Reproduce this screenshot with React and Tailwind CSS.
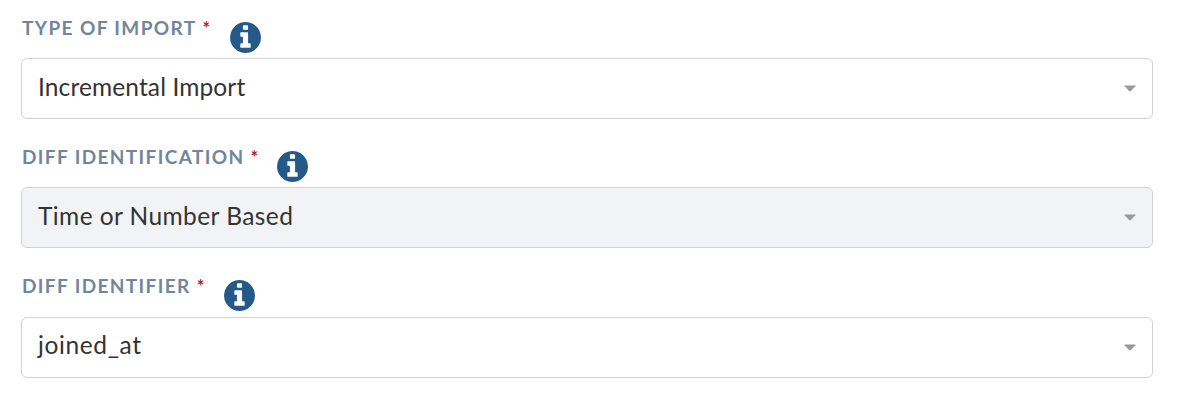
const fields = [
  {
    label: 'TYPE OF IMPORT',
    value: 'Incremental Import',
    tracking: 'tracking-[0.12px]',
    disabled: false,
  },
  {
    label: 'DIFF IDENTIFICATION',
    value: 'Time or Number Based',
    tracking: 'tracking-[0.42px]',
    disabled: true,
  },
  {
    label: 'DIFF IDENTIFIER',
    value: 'joined_at',
    tracking: 'tracking-[0.62px]',
    disabled: false,
  },
]

function InfoIcon({ className }) {
  return (
    <svg className={className} viewBox="0 128 1536 1536" fill="currentColor" aria-hidden="true">
      <path d="M1024 1376v-160q0-14-9-23t-23-9h-96v-512q0-14-9-23t-23-9h-320q-14 0-23 9t-9 23v160q0 14 9 23t23 9h96v320h-96q-14 0-23 9t-9 23v160q0 14 9 23t23 9h448q14 0 23-9t9-23zm-128-896v-160q0-14-9-23t-23-9h-192q-14 0-23 9t-9 23v160q0 14 9 23t23 9h192q14 0 23-9t9-23zm640 416q0 209-103 385.5t-279.5 279.5-385.5 103-385.5-103-279.5-279.5-103-385.5 103-385.5 279.5-279.5 385.5-103 385.5 103 279.5 279.5 103 385.5z" />
    </svg>
  )
}

function SelectField({ label, value, tracking, disabled }) {
  return (
    <div className="h-[129.4px]">
      <div className="flex h-[44px] items-start">
        <span className="pt-[1.7px] pl-px text-[19px] leading-[24px] font-bold tracking-[1.38px] text-[#6f869d]">
          {label}
        </span>
        <span className="ml-[6px] pt-[1.7px] text-[18px] leading-[24px] font-bold text-[#b3261e]">*</span>
        <InfoIcon className="mt-[7.7px] ml-[19.3px] size-[31px] text-[#245a87]" />
      </div>
      <button
        type="button"
        disabled={disabled}
        className={`flex h-[61px] w-[1132px] items-center justify-between rounded-[6px] border border-[#d0d2d7] px-4 ${
          disabled ? 'bg-[#f2f3f5]' : 'bg-white'
        }`}
      >
        <span className={`pb-[3px] text-[24.5px] text-[#333] ${tracking}`}>{value}</span>
        <svg width="12" height="7" viewBox="0 0 12 7" fill="#999">
          <path d="M.6.5h10.8v.7L6.6 6.2H5.4L.6 1.2z" />
        </svg>
      </button>
    </div>
  )
}

function App() {
  return (
    <div className="h-[404px] overflow-hidden bg-white pt-[14px] pl-[21px] font-['Lato',sans-serif]">
      {fields.map((field) => (
        <SelectField key={field.label} {...field} />
      ))}
    </div>
  )
}

export default App
